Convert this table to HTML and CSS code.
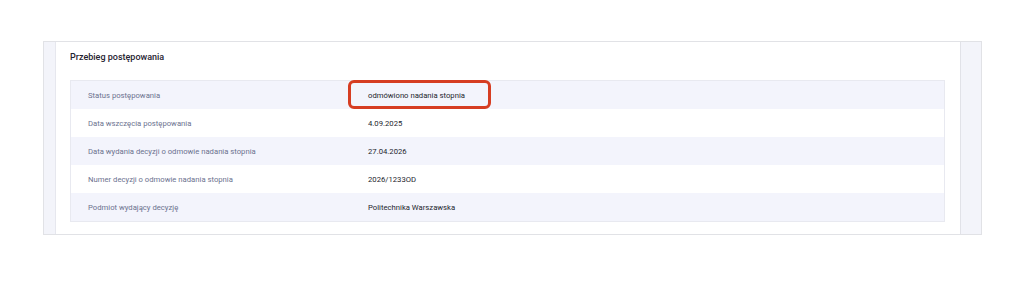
FILE: index.html
```html
<!DOCTYPE html>
<html lang="pl">
<head>
<meta charset="utf-8">
<link rel="stylesheet" href="styles.css">
</head>
<body>
<div class="page">
  <div class="panel">
    <div class="strip strip-left"></div>
    <div class="main">
      <h2 class="title">Przebieg postępowania</h2>
      <div class="table">
        <div class="row">
          <div class="label">Status postępowania</div>
          <div class="value"><span class="highlight"></span>odmówiono nadania stopnia</div>
        </div>
        <div class="row">
          <div class="label">Data wszczęcia postępowania</div>
          <div class="value">4.09.2025</div>
        </div>
        <div class="row">
          <div class="label">Data wydania decyzji o odmowie nadania stopnia</div>
          <div class="value">27.04.2026</div>
        </div>
        <div class="row">
          <div class="label">Numer decyzji o odmowie nadania stopnia</div>
          <div class="value">2026/1233OD</div>
        </div>
        <div class="row">
          <div class="label">Podmiot wydający decyzję</div>
          <div class="value">Politechnika Warszawska</div>
        </div>
      </div>
    </div>
    <div class="strip strip-right"></div>
  </div>
</div>
</body>
</html>
```
FILE: styles.css
```css
* { box-sizing: border-box; }
html, body { margin: 0; padding: 0; background: #ffffff; }
body { font-family: Roboto, "Noto Sans", sans-serif; width: 1024px; height: 288px; }
.page { padding: 41px 0 0 43px; }
.panel {
  width: 939px;
  height: 194px;
  border: 1px solid #e1e2e6;
  display: flex;
  background: #ffffff;
}
.strip { background: #f3f4fa; flex: none; }
.strip-left { width: 12px; border-right: 1px solid #e6e7ee; }
.strip-right { width: 21px; border-left: 1px solid #e1e2e8; }
.main { flex: 1; padding: 9px 15px 13px 14px; }
.title {
  margin: 0 0 17px 0;
  font-size: 9px;
  line-height: 12px;
  font-weight: 500;
  color: #1f2330;
}
.table { border: 1px solid #e8e9f0; }
.row {
  display: flex;
  align-items: center;
  height: 28px;
  font-size: 7.7px;
}
.row:nth-child(odd) { background: #f3f4fc; }
.row:nth-child(even) { background: #ffffff; }
.label {
  width: 297px;
  padding-left: 17px;
  color: #6c728f;
  flex: none;
}
.value {
  position: relative;
  color: #23252d;
  height: 100%;
  display: flex;
  align-items: center;
}
.highlight {
  position: absolute;
  left: -20px;
  top: -1px;
  width: 143px;
  height: 29px;
  border: 3px solid #d63d22;
  border-radius: 6px;
}
```
